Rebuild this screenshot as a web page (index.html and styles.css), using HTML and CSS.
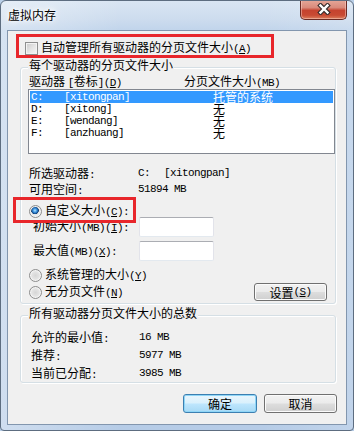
FILE: index.html
```html
<!DOCTYPE html>
<html lang="zh-CN">
<head>
<meta charset="utf-8">
<title>虚拟内存</title>
<link rel="stylesheet" href="styles.css">
</head>
<body>
<div class="window">
  <div class="titlebar">
    <span class="title">虚拟内存</span>
    <div class="close">
      <svg width="14" height="12" viewBox="0 0 14 12">
        <path d="M3.5 2.5 L10.5 9.5 M10.5 2.5 L3.5 9.5" stroke="#3a2f2e" stroke-width="4.6" stroke-linecap="square" fill="none"/>
        <path d="M3.5 2.5 L10.5 9.5 M10.5 2.5 L3.5 9.5" stroke="#ffffff" stroke-width="2.4" stroke-linecap="square" fill="none"/>
      </svg>
    </div>
  </div>
  <div class="client">
    <div class="auto-row">
      <span class="checkbox"></span>
      <span class="auto-label">自动管理所有驱动器的分页文件大小<span class="m">(<u>A</u>)</span></span>
    </div>

    <div class="group group-drives">
      <span class="legend">每个驱动器的分页文件大小</span>
      <div class="list-head">
        <span class="head-c1">驱动器 <span class="m">[</span>卷标<span class="m">](<u>D</u>)</span></span>
        <span>分页文件大小<span class="m">(MB)</span></span>
      </div>
      <div class="listbox">
        <div class="row selected"><span class="c1 m">C:</span><span class="c2 m">[xitongpan]</span><span class="c3">托管的系统</span></div>
        <div class="row"><span class="c1 m">D:</span><span class="c2 m">[xitong]</span><span class="c3">无</span></div>
        <div class="row"><span class="c1 m">E:</span><span class="c2 m">[wendang]</span><span class="c3">无</span></div>
        <div class="row"><span class="c1 m">F:</span><span class="c2 m">[anzhuang]</span><span class="c3">无</span></div>
      </div>
      <div class="info">
        <span>所选驱动器<span class="m">:</span></span><span class="m">C:<span class="gap">[xitongpan]</span></span>
        <span>可用空间<span class="m">:</span></span><span class="m">51894 MB</span>
      </div>
      <div class="radio-row custom">
        <span class="mark"></span>
        <span class="radio on"></span><span class="radio-label">自定义大小<span class="m">(<u>C</u>):</span></span>
      </div>
      <div class="field-row">
        <span class="field-label">初始大小<span class="m">(MB)(<u>I</u>):</span></span>
        <span class="textbox"></span>
      </div>
      <div class="field-row second">
        <span class="field-label">最大值<span class="m">(MB)(<u>X</u>):</span></span>
        <span class="textbox"></span>
      </div>
      <div class="radio-row sys">
        <span class="radio"></span><span class="radio-label">系统管理的大小<span class="m">(<u>Y</u>)</span></span>
      </div>
      <div class="radio-row none">
        <span class="radio"></span><span class="radio-label">无分页文件<span class="m">(<u>N</u>)</span></span>
        <span class="btn btn-set">设置<span class="m">(<u>S</u>)</span></span>
      </div>
    </div>

    <div class="group group-total">
      <span class="legend">所有驱动器分页文件大小的总数</span>
      <div class="totals">
        <span>允许的最小值<span class="m">:</span></span><span class="m">16 MB</span>
        <span>推荐<span class="m">:</span></span><span class="m">5977 MB</span>
        <span>当前已分配<span class="m">:</span></span><span class="m">3985 MB</span>
      </div>
    </div>

    <div class="buttons">
      <span class="btn btn-ok">确定</span>
      <span class="btn btn-cancel">取消</span>
    </div>
  </div>
</div>
</body>
</html>
```

FILE: styles.css
```css
* { box-sizing: border-box; }
html, body { margin: 0; padding: 0; }
body {
  width: 354px;
  height: 431px;
  overflow: hidden;
  font-family: "Noto Sans CJK SC", "Noto Sans", sans-serif;
  font-size: 12px;
  color: #000;
  background: #b9cfe8;
}
.m {
  font-family: "Liberation Mono", "Noto Sans CJK SC", monospace;
  font-size: 11px;
  letter-spacing: -0.6px;
}
u { text-decoration: underline; text-underline-offset: 1px; }

.window {
  width: 354px;
  height: 431px;
  border: 1px solid #5d6d80;
  border-radius: 6px 6px 4px 4px;
  background:
    linear-gradient(90deg, rgba(255,255,255,0.35) 0px, rgba(255,255,255,0) 120px, rgba(255,255,255,0) 260px, rgba(255,255,255,0.15) 354px),
    linear-gradient(180deg, #d9e5f3 0px, #cddcee 18px, #c0d4eb 30px, #b6cce7 100%);
  display: flex;
  flex-direction: column;
  overflow: hidden;
}
.titlebar {
  height: 29px;
  display: flex;
  align-items: flex-start;
  flex: none;
}
.title {
  padding: 6px 0 0 7px;
  line-height: 16px;
  font-size: 12px;
  text-shadow: 0 0 6px #fff, 0 0 10px #fff, 0 0 3px #fff;
}
.close {
  margin: -1px 6px 0 auto;
  width: 47px;
  height: 20px;
  border: 1px solid #6a2a24;
  border-top: none;
  border-radius: 0 0 5px 5px;
  background: linear-gradient(180deg, #e6a899 0%, #d98a7b 40%, #c5432f 55%, #c84a33 80%, #dc7f5e 100%);
  box-shadow: inset 0 0 0 1px rgba(255,220,210,0.45);
  display: flex;
  align-items: center;
  justify-content: center;
}
.close svg { display: block; margin-top: -1px; }

.client {
  margin-left: 6px;
  width: 340px;
  height: 395px;
  flex: none;
  border: 1px solid #8296ae;
  background: #f0f0f0;
}

/* top checkbox row with red annotation frame */
.auto-row {
  margin: 3px 0 0 8px;
  width: 258px;
  height: 24px;
  border: 3px solid #e8262b;
  padding: 4px 0 0 6px;
  display: flex;
  align-items: center;
  line-height: 14px;
}
.checkbox {
  width: 13px;
  height: 13px;
  flex: none;
  border: 1px solid #8e8f8f;
  background: linear-gradient(135deg, #c9c9c9 0%, #e4e4e4 50%, #f7f7f7 100%);
  box-shadow: inset 0 0 0 1px #f3f3f3;
}
.auto-label { margin-left: 3px; white-space: nowrap; }

/* group boxes */
.group {
  position: relative;
  margin-left: 12px;
  width: 316px;
  border: 1px solid #d5dfe5;
  border-radius: 3px;
  box-shadow: inset 1px 1px 0 #fff, 1px 1px 0 #fff;
}
.legend {
  position: absolute;
  left: 7px;
  top: -10px;
  padding: 0 1px;
  background: #f0f0f0;
  line-height: 14px;
  white-space: nowrap;
}
.group-drives {
  margin-top: 9px;
  height: 237px;
  padding-left: 7px;
}
.list-head {
  margin-top: 7px;
  padding-left: 1px;
  display: flex;
  line-height: 12px;
  height: 12px;
  white-space: nowrap;
}
.head-c1 { width: 155px; flex: none; }

.listbox {
  margin-top: 2px;
  width: 307px;
  height: 65px;
  border: 1px solid #828790;
  background: #fff;
  padding: 1px;
}
.row {
  height: 12px;
  line-height: 12px;
  display: flex;
  padding-left: 1px;
  white-space: nowrap;
}
.row.selected { background: #3399ff; color: #fff; }
.c1 { width: 33px; flex: none; }
.c2 { width: 149px; flex: none; }

.info {
  margin-top: 12px;
  padding-left: 1px;
  display: grid;
  grid-template-columns: 109px 1fr;
  line-height: 14px;
  white-space: nowrap;
}
.gap { margin-left: 14px; }

.radio-row {
  display: flex;
  align-items: center;
  padding-left: 1px;
  white-space: nowrap;
}
.radio-row.custom {
  position: relative;
  margin-top: 7px;
  height: 12px;
}
.mark {
  position: absolute;
  left: -15px;
  top: -8px;
  width: 123px;
  height: 26px;
  border: 3px solid #e8262b;
}
.radio {
  width: 13px;
  height: 13px;
  flex: none;
  border-radius: 50%;
  border: 1px solid #8d8d8d;
  background: radial-gradient(circle at 50% 50%, #d6d6d6 0%, #e3e3e3 45%, #f6f6f6 100%);
  box-shadow: inset 0 0 0 1px #f4f4f4;
}
.radio.on {
  background: radial-gradient(circle at 45% 40%, #b9e4ff 0%, #4aa0e6 18%, #1a5da5 34%, #163f70 40%, #e6e6e6 46%, #f8f8f8 100%);
}
.radio-label { margin-left: 3px; line-height: 14px; }

.field-row {
  display: flex;
  align-items: center;
  padding-left: 5px;
  height: 20px;
  white-space: nowrap;
}
.field-row.second { margin-top: 4px; }
.field-label { width: 106px; flex: none; line-height: 20px; }
.textbox {
  width: 75px;
  height: 20px;
  background: #fff;
  border: 1px solid #e2e3ea;
  border-top-color: #abadb3;
  border-bottom-color: #e3e9ef;
  border-radius: 2px;
}
.radio-row.sys { margin-top: 7px; height: 14px; }
.radio-row.none { margin-top: 1px; height: 18px; }

.btn {
  display: flex;
  align-items: center;
  justify-content: center;
  height: 19px;
  border: 1px solid #707070;
  border-radius: 3px;
  background: linear-gradient(180deg, #f2f2f2 0%, #ebebeb 48%, #dddddd 52%, #cfcfcf 100%);
  box-shadow: inset 0 0 0 1px #fbfbfb;
  line-height: 17px;
  white-space: nowrap;
}
.btn-set {
  margin-left: auto;
  margin-right: 8px;
  width: 73px;
  height: 18px;
}

.group-total {
  margin-top: 11px;
  height: 68px;
}
.totals {
  margin-top: 13px;
  padding-left: 10px;
  display: grid;
  grid-template-columns: 108px 1fr;
  line-height: 16px;
  white-space: nowrap;
}

.buttons {
  margin-top: 11px;
  display: flex;
  justify-content: flex-end;
  gap: 7px;
  padding-right: 9px;
}
.btn-ok {
  width: 74px;
  border-color: #3c7fb1;
  box-shadow: inset 0 0 0 1px #8fd6f7;
  background: linear-gradient(180deg, #eaf6fd 0%, #d9f0fc 48%, #bee6fd 52%, #a7d9f5 100%);
}
.btn-cancel { width: 73px; }
```
